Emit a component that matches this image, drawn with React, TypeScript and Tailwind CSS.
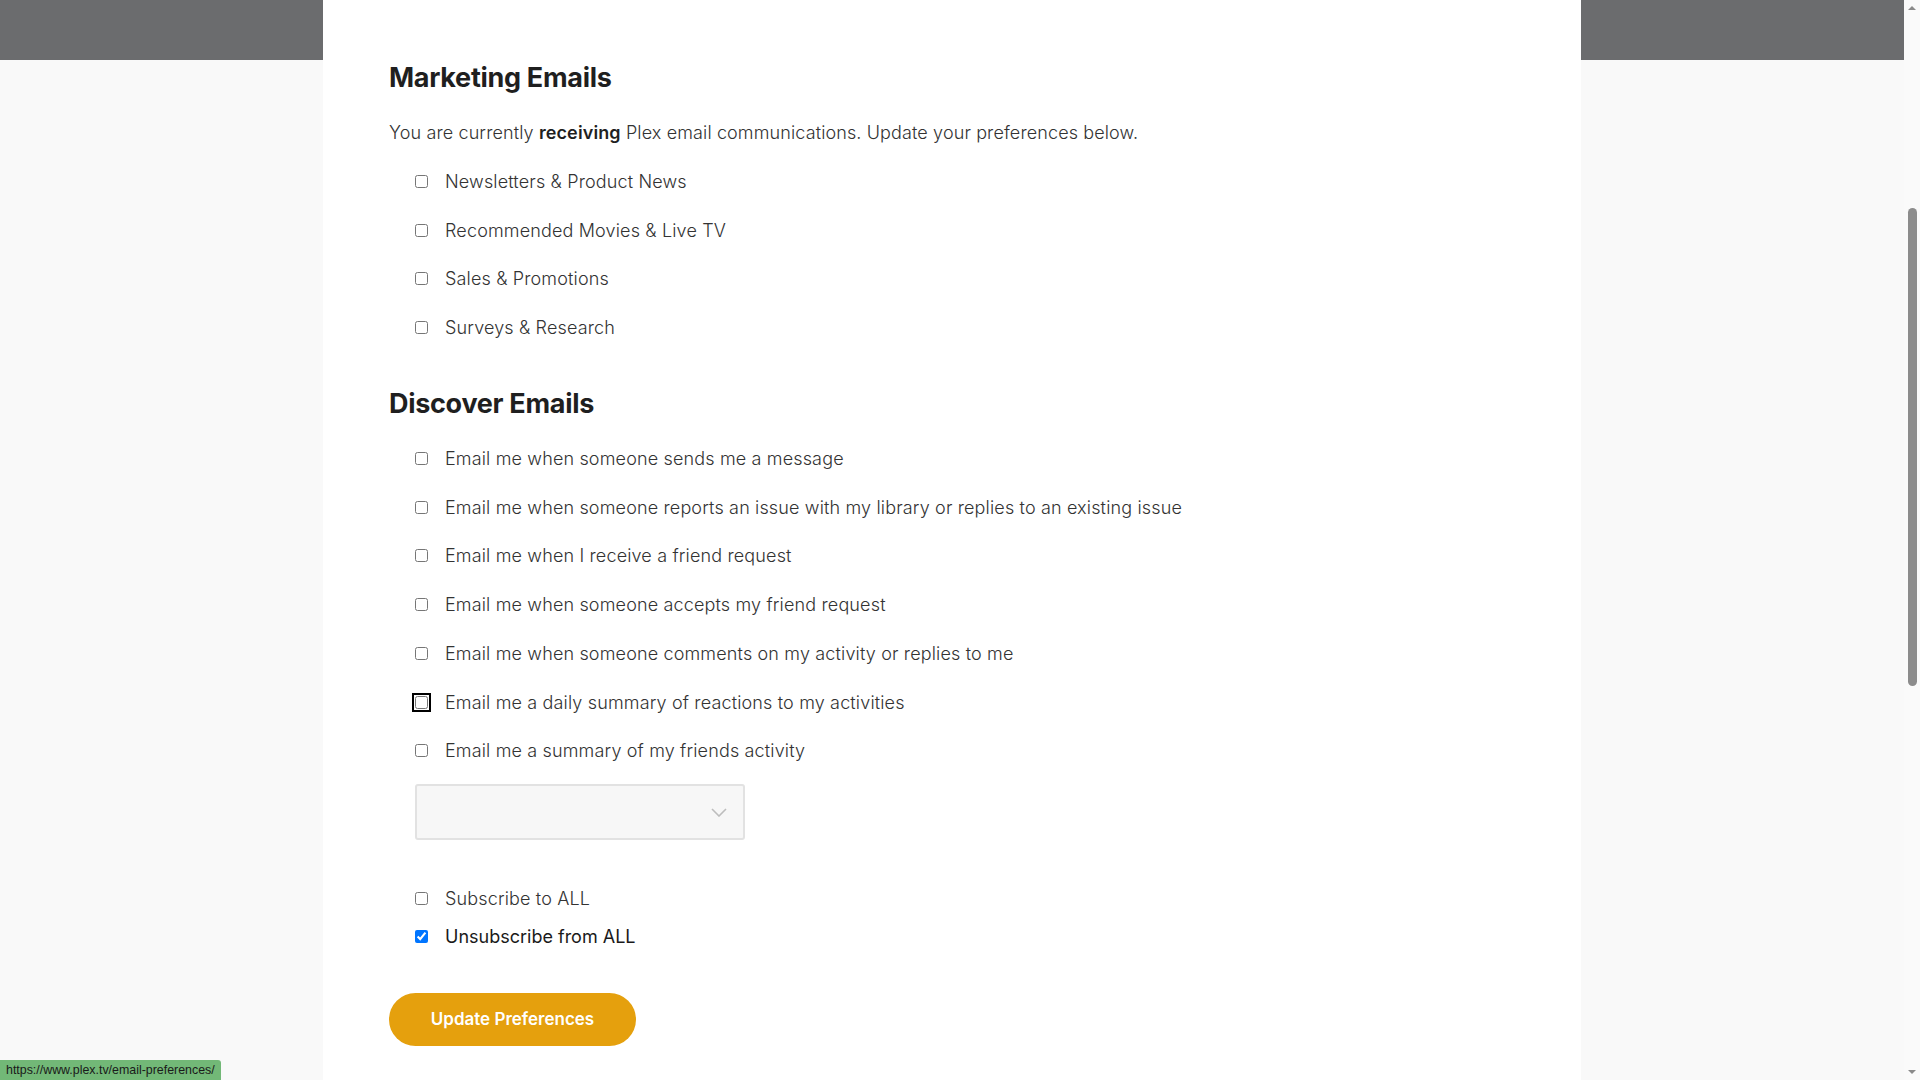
import React from "react";

const marketing = [
  "Newsletters & Product News",
  "Recommended Movies & Live TV",
  "Sales & Promotions",
  "Surveys & Research",
];

const discover = [
  "Email me when someone sends me a message",
  "Email me when someone reports an issue with my library or replies to an existing issue",
  "Email me when I receive a friend request",
  "Email me when someone accepts my friend request",
  "Email me when someone comments on my activity or replies to me",
  "Email me a daily summary of reactions to my activities",
  "Email me a summary of my friends activity",
];

function Row({ label, focused = false }: { label: string; focused?: boolean }) {
  return (
    <label className="flex items-center h-[48.7px] pl-[26px] gap-[17px]">
      <input
        type="checkbox"
        className={`w-[13px] h-[13px] m-0 shrink-0 ${
          focused ? "outline-2 outline-black outline-offset-1 rounded-[3px]" : ""
        }`}
      />
      <span className="text-[18px] font-light tracking-[0.15px] text-[#333]">{label}</span>
    </label>
  );
}

export default function App() {
  return (
    <div
      className="relative flex h-screen w-full overflow-hidden bg-[#f9f9f9]"
      style={{ fontFamily: "Inter, 'Noto Sans', sans-serif" }}
    >
      {/* page */}
      <div className="flex-1 flex justify-center bg-[linear-gradient(to_bottom,#6b6c6e_60px,#f9f9f9_60px)]">
        <div className="w-[1258px] h-full bg-white pl-[66px] pt-[60px] flex flex-col">
          {/* Marketing */}
          <h2 className="text-[27px] leading-[36px] font-bold text-[#1f1f1f] tracking-[-0.3px]">
            Marketing Emails
          </h2>
          <p className="mt-[23px] text-[18px] leading-[28px] font-light tracking-[0.12px] text-[#333]">
            You are currently <strong className="font-semibold text-[#1f1f1f]">receiving</strong> Plex email
            communications. Update your preferences below.
          </p>
          <div className="mt-[10px] flex flex-col">
            {marketing.map((m) => (
              <Row key={m} label={m} />
            ))}
          </div>

          {/* Discover */}
          <h2 className="mt-[34px] text-[27px] leading-[36px] font-bold text-[#1f1f1f] tracking-[-0.3px]">
            Discover Emails
          </h2>
          <div className="mt-[12.5px] flex flex-col">
            {discover.map((d, i) => (
              <Row key={d} label={d} focused={i === 5} />
            ))}
          </div>

          {/* frequency select */}
          <div className="mt-[9px] ml-[26px] w-[330px] h-[56px] rounded-[3px] border-2 border-[#e2e2e2] bg-[#f7f7f7] flex items-center justify-end pr-[16px]">
            <svg width="16" height="9" viewBox="0 0 16 9" fill="none">
              <path d="M1 1l7 7 7-7" stroke="#bdbdbd" strokeWidth="1.6" />
            </svg>
          </div>

          <div className="mt-[39px] flex flex-col">
            <label className="flex items-center h-[38px] pl-[26px] gap-[17px]">
              <input type="checkbox" className="w-[13px] h-[13px] m-0 shrink-0" />
              <span className="text-[18px] font-light tracking-[0.15px] text-[#333]">Subscribe to ALL</span>
            </label>
            <label className="flex items-center h-[38px] pl-[26px] gap-[17px]">
              <input type="checkbox" defaultChecked className="w-[13px] h-[13px] m-0 shrink-0" />
              <span className="text-[18px] font-normal text-[#1a1a1a]">Unsubscribe from ALL</span>
            </label>
          </div>

          <button className="mt-[38px] w-[247px] h-[53px] rounded-full bg-[#e5a00d] text-white text-[17px] font-semibold">
            Update Preferences
          </button>
        </div>
      </div>

      {/* scrollbar */}
      <div className="w-[16px] h-full bg-[#fafafa] flex flex-col items-center">
        <div className="h-[16px] flex items-center justify-center">
          <div className="w-0 h-0 border-l-[4px] border-r-[4px] border-b-[4px] border-l-transparent border-r-transparent border-b-[#8a8a8a]" />
        </div>
        <div className="mt-[192px] w-[9px] h-[478px] rounded-full bg-[#8c8c8c]" />
        <div className="flex-1" />
        <div className="h-[16px] flex items-center justify-center">
          <div className="w-0 h-0 border-l-[4px] border-r-[4px] border-t-[4px] border-l-transparent border-r-transparent border-t-[#8a8a8a]" />
        </div>
      </div>

      {/* status bar */}
      <div
        className="absolute left-0 bottom-0 h-[20px] px-[6px] flex items-center bg-[#72b877] rounded-tr-[3px] text-[12.4px] text-[#1a1a1a]"
        style={{ fontFamily: "'Liberation Sans', Arial, sans-serif" }}
      >
        https://www.plex.tv/email-preferences/
      </div>
    </div>
  );
}
